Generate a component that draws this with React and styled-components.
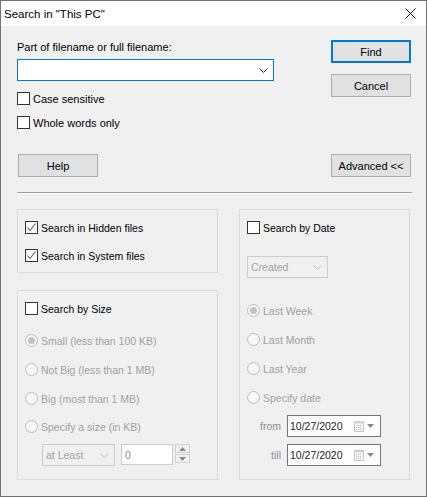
import React from 'react'
import styled, { createGlobalStyle } from 'styled-components'

const GlobalStyle = createGlobalStyle`
  html, body {
    margin: 0;
    padding: 0;
    background: #f0f0f0;
  }
  body {
    font-family: "Liberation Sans", Arial, sans-serif;
    font-size: 11px;
    color: #000;
  }
  * { box-sizing: border-box; }
`

const Window = styled.div`
  width: 427px;
  height: 497px;
  border: 1px solid #717171;
  background: #f0f0f0;
  display: flex;
  flex-direction: column;
  overflow: hidden;
`

const TitleBar = styled.div`
  height: 25px;
  flex: none;
  background: #fff;
  display: flex;
  align-items: center;
  justify-content: space-between;
  padding: 0 10px 0 3px;
  font-size: 11.5px;
`

const Body = styled.div`
  padding: 14px 15px 0 16px;
  display: flex;
  flex-direction: column;
`

const TopSection = styled.div`
  display: flex;
  justify-content: space-between;
  align-items: flex-start;
`

const MainColumn = styled.div`
  width: 257px;
  display: flex;
  flex-direction: column;
`

const ButtonColumn = styled.div`
  display: flex;
  flex-direction: column;
  gap: 11px;
`

const FieldLabel = styled.div`
  height: 15px;
  line-height: 15px;
`

const Combo = styled.div`
  margin-top: ${p => p.$mt || 0}px;
  margin-left: ${p => p.$ml || 0}px;
  width: ${p => p.$width ? p.$width + 'px' : '100%'};
  height: 22px;
  flex: none;
  border: 1px solid ${p => p.$focused ? '#0078d7' : '#cccccc'};
  background: ${p => p.$focused ? '#fff' : '#f0f0f0'};
  color: ${p => p.$focused ? '#000' : '#a2a2a2'};
  display: flex;
  align-items: center;
  justify-content: space-between;
  padding: 0 5px 0 3px;
  font-size: 10.5px;
`

const CheckRow = styled.label`
  display: flex;
  align-items: center;
  gap: 3px;
  height: 13px;
  margin-top: ${p => p.$mt || 0}px;
  font-size: ${p => p.$small ? '10.5px' : '11px'};
`

const Box = styled.span`
  width: 13px;
  height: 13px;
  flex: none;
  border: 1px solid #333;
  background: #fff;
  display: flex;
  align-items: center;
  justify-content: center;
`

const Button = styled.div`
  width: 80px;
  height: 23px;
  display: flex;
  align-items: center;
  justify-content: center;
  background: #e1e1e1;
  border: ${p => p.$default ? '2px solid #0078d7' : '1px solid #adadad'};
  font-size: 11px;
`

const ButtonRow = styled.div`
  margin-top: 25px;
  display: flex;
  justify-content: space-between;
  padding-left: 1px;
`

const Separator = styled.div`
  margin-top: 15px;
  height: 2px;
  border-top: 1px solid #a0a0a0;
  border-bottom: 1px solid #fff;
  margin-right: -1px;
`

const Groups = styled.div`
  margin-top: 15px;
  display: grid;
  grid-template-columns: 201px 171px;
  column-gap: 21px;
  height: 271px;
`

const LeftStack = styled.div`
  display: flex;
  flex-direction: column;
  gap: 17px;
`

const GroupBox = styled.div`
  border: 1px solid #dcdcdc;
  padding: 11px 7px 0;
  display: flex;
  flex-direction: column;
  ${p => p.$height ? `height: ${p.$height}px; flex: none;` : 'flex: 1;'}
`

const RadioRow = styled.div`
  display: flex;
  align-items: center;
  gap: 3px;
  height: 13px;
  margin-top: ${p => p.$mt || 0}px;
  color: #a0a0a0;
  font-size: 10.5px;
`

const Circle = styled.span`
  width: 13px;
  height: 13px;
  flex: none;
  border-radius: 50%;
  border: 1px solid #bcbcbc;
  background: #f7f7f7;
  display: flex;
  align-items: center;
  justify-content: center;

  &::after {
    content: '';
    display: ${p => p.$checked ? 'block' : 'none'};
    width: 7px;
    height: 7px;
    border-radius: 50%;
    background: #c3c3c3;
  }
`

const SizeRow = styled.div`
  margin-top: 11px;
  margin-left: 17px;
  display: flex;
  align-items: flex-start;
`

const SpinEdit = styled.div`
  margin-left: 6px;
  width: 52px;
  height: 21px;
  border: 1px solid #cccccc;
  background: #fff;
  color: #8d8aa8;
  padding: 0 3px;
  display: flex;
  align-items: center;
  font-size: 10.5px;
`

const Spinners = styled.div`
  margin-left: 2px;
  display: flex;
  flex-direction: column;
  gap: 1px;
`

const SpinButton = styled.div`
  width: 15px;
  height: 9px;
  border: 1px solid #d2d2d2;
  background: #f0f0f0;
  display: flex;
  align-items: center;
  justify-content: center;
`

const DateRow = styled.div`
  margin-top: ${p => p.$mt || 0}px;
  display: flex;
  align-items: center;
`

const DateLabel = styled.span`
  width: 34px;
  text-align: right;
  color: #8f8f8f;
  font-size: 10.5px;
`

const DateEdit = styled.div`
  margin-left: 6px;
  width: 94px;
  height: 22px;
  border: 1px solid #767676;
  background: #fff;
  color: #222;
  display: flex;
  align-items: center;
  justify-content: space-between;
  padding: 0 6px 0 2px;
  font-size: 10.5px;
`

const DateTools = styled.span`
  display: flex;
  align-items: center;
  gap: 3px;
`

const Chevron = ({ color = '#333' }) => (
  <svg width="9" height="5" viewBox="0 0 9 5">
    <polyline points="0.5,0.5 4.5,4.5 8.5,0.5" fill="none" stroke={color} strokeWidth="1" />
  </svg>
)

const Tick = () => (
  <svg width="11" height="11" viewBox="0 0 11 11">
    <polyline points="1.5,5.5 4,8.5 9.5,1.5" fill="none" stroke="#5a5a5a" strokeWidth="1.1" />
  </svg>
)

const Triangle = ({ up }) => (
  <svg width="7" height="4" viewBox="0 0 7 4">
    <polygon points={up ? '0,4 7,4 3.5,0' : '0,0 7,0 3.5,4'} fill="#8a8a8a" />
  </svg>
)

const CalendarIcon = () => (
  <svg width="10" height="11" viewBox="0 0 10 11">
    <rect x="0.5" y="0.5" width="9" height="10" fill="#f4f4f4" stroke="#c8c8c8" />
    <rect x="0.5" y="0.5" width="9" height="2" fill="#d6d6d6" />
    {[3, 5, 7].map(y => [2, 4, 6].map(x => (
      <rect key={`${x}-${y}`} x={x} y={y + 1} width="1" height="1" fill="#c0c0c0" />
    )))}
  </svg>
)

const Close = () => (
  <svg width="11" height="11" viewBox="0 0 11 11">
    <path d="M0.5 0.5 L10.5 10.5 M10.5 0.5 L0.5 10.5" stroke="#111" strokeWidth="1" />
  </svg>
)

const CheckBox = ({ checked, children, ...rest }) => (
  <CheckRow {...rest}>
    <Box>{checked && <Tick />}</Box>
    <span>{children}</span>
  </CheckRow>
)

const Radio = ({ checked, children, mt }) => (
  <RadioRow $mt={mt}>
    <Circle $checked={checked} />
    <span>{children}</span>
  </RadioRow>
)

const DateField = ({ label, value, mt }) => (
  <DateRow $mt={mt}>
    <DateLabel>{label}</DateLabel>
    <DateEdit>
      <span>{value}</span>
      <DateTools>
        <CalendarIcon />
        <Triangle />
      </DateTools>
    </DateEdit>
  </DateRow>
)

const sizeOptions = [
  { text: 'Small (less than 100 KB)', mt: 19, checked: true },
  { text: 'Not Big (less than 1 MB)', mt: 16 },
  { text: 'Big (most than 1 MB)', mt: 16 },
  { text: 'Specify a size (in KB)', mt: 15 },
]

const dateOptions = [
  { text: 'Last Week', mt: 26, checked: true },
  { text: 'Last Month', mt: 16 },
  { text: 'Last Year', mt: 16 },
  { text: 'Specify date', mt: 16 },
]

const App = () => {
  return (
    <Window>
      <GlobalStyle />
      <TitleBar>
        <span>Search in "This PC"</span>
        <Close />
      </TitleBar>
      <Body>
        <TopSection>
          <MainColumn>
            <FieldLabel>Part of filename or full filename:</FieldLabel>
            <Combo $focused $mt={4}>
              <span />
              <Chevron />
            </Combo>
            <CheckBox $mt={11}>Case sensitive</CheckBox>
            <CheckBox $mt={11}>Whole words only</CheckBox>
          </MainColumn>
          <ButtonColumn>
            <Button $default>Find</Button>
            <Button>Cancel</Button>
          </ButtonColumn>
        </TopSection>

        <ButtonRow>
          <Button>Help</Button>
          <Button>Advanced &lt;&lt;</Button>
        </ButtonRow>

        <Separator />

        <Groups>
          <LeftStack>
            <GroupBox $height={64}>
              <CheckBox checked $small>Search in Hidden files</CheckBox>
              <CheckBox checked $small $mt={15}>Search in System files</CheckBox>
            </GroupBox>
            <GroupBox>
              <CheckBox $small>Search by Size</CheckBox>
              {sizeOptions.map(o => (
                <Radio key={o.text} mt={o.mt} checked={o.checked}>{o.text}</Radio>
              ))}
              <SizeRow>
                <Combo $width={73}>
                  <span>at Least</span>
                  <Chevron color="#bdbdbd" />
                </Combo>
                <SpinEdit>0</SpinEdit>
                <Spinners>
                  <SpinButton><Triangle up /></SpinButton>
                  <SpinButton><Triangle /></SpinButton>
                </Spinners>
              </SizeRow>
            </GroupBox>
          </LeftStack>
          <GroupBox>
            <CheckBox $small>Search by Date</CheckBox>
            <Combo $width={81} $mt={22}>
              <span>Created</span>
              <Chevron color="#bdbdbd" />
            </Combo>
            {dateOptions.map(o => (
              <Radio key={o.text} mt={o.mt} checked={o.checked}>{o.text}</Radio>
            ))}
            <DateField label="from" value="10/27/2020" mt={11} />
            <DateField label="till" value="10/27/2020" mt={7} />
          </GroupBox>
        </Groups>
      </Body>
    </Window>
  )
}

export default App
